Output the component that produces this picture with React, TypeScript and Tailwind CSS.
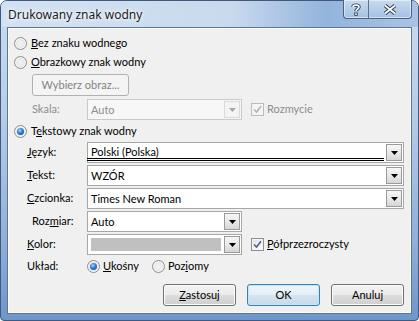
import React from "react";

function Radio({ checked }: { checked?: boolean }) {
  return (
    <div className="w-[13px] h-[13px] shrink-0 rounded-full border border-[#8e8f8f] bg-[radial-gradient(circle_at_50%_50%,#f4f4f4_0%,#e8e8e8_55%,#d3d3d3_100%)] shadow-[inset_0_0_0_1px_#f6f6f6] flex items-center justify-center">
      {checked && (
        <div className="w-[7px] h-[7px] rounded-full bg-[radial-gradient(circle_at_40%_35%,#9ad9ff_0%,#2f7fd6_45%,#123e8c_100%)]" />
      )}
    </div>
  );
}

function Check({ disabled }: { disabled?: boolean }) {
  return (
    <div
      className={`w-[13px] h-[13px] shrink-0 border flex items-center justify-center ${
        disabled
          ? "border-[#bcbcbc] bg-[#f4f4f4]"
          : "border-[#8e8f8f] bg-[linear-gradient(135deg,#dcdcdc_0%,#f0f0f0_50%,#ffffff_100%)] shadow-[inset_0_0_0_1px_#f4f4f4]"
      }`}
    >
      <svg width="9" height="9" viewBox="0 0 9 9">
        <path
          d="M1 4.5 L3.5 7 L8 1.2"
          fill="none"
          stroke={disabled ? "#b3b3b3" : "#4a5f97"}
          strokeWidth="1.6"
        />
      </svg>
    </div>
  );
}

function DropBtn({ disabled }: { disabled?: boolean }) {
  return (
    <div
      className={`w-[16px] h-[17px] mr-[1px] shrink-0 border flex items-center justify-center ${
        disabled
          ? "border-[#dadada] bg-[#f4f4f4]"
          : "border-[#9a9a9a] bg-[linear-gradient(to_bottom,#f6f6f6_0%,#e9e9e9_50%,#d6d6d6_100%)]"
      }`}
    >
      <svg width="7" height="4" viewBox="0 0 7 4">
        <path d="M0 0h7L3.5 4z" fill={disabled ? "#a6a6a6" : "#000"} />
      </svg>
    </div>
  );
}

function Combo({
  value,
  short,
  disabled,
  underlined,
  swatch,
}: {
  value?: string;
  short?: boolean;
  disabled?: boolean;
  underlined?: boolean;
  swatch?: boolean;
}) {
  return (
    <div
      className={`h-[21px] flex items-center border ${short ? "w-[155px]" : "flex-1"} ${
        disabled ? "border-[#c9c9c9] bg-[#f7f7f7] text-[#8d8d8d]" : "border-[#a7a7a7] bg-white"
      }`}
    >
      {swatch ? (
        <div className="flex-1 h-[13px] ml-[3px] mr-[3px] bg-[#c0c0c0]" />
      ) : (
        <div className="flex-1 self-stretch flex items-center pl-[3px] mr-[2px]">
          <div
            className={`flex-1 h-full flex items-center leading-none ${
              underlined ? "border-b-[3px] border-double border-black -ml-[4px] pl-[4px] mb-[2px] pt-[2px]" : ""
            }`}
          >
            {value}
          </div>
        </div>
      )}
      <DropBtn disabled={disabled} />
    </div>
  );
}

function Btn({ children, kind }: { children: React.ReactNode; kind?: "default" | "disabled" }) {
  const cls =
    kind === "default"
      ? "border-[#3c7fb1] bg-[linear-gradient(to_bottom,#eef5fa_0%,#e3eef6_50%,#d4e4f0_50%,#c7dbea_100%)] shadow-[inset_0_0_0_1px_#c4e5f7]"
      : kind === "disabled"
      ? "border-[#adb2b5] bg-[#f4f4f4] text-[#838383]"
      : "border-[#707070] bg-[linear-gradient(to_bottom,#f2f2f2_0%,#ebebeb_50%,#dddddd_50%,#cfcfcf_100%)] shadow-[inset_0_0_0_1px_#fcfcfc]";
  return (
    <div className={`w-[73px] h-[22px] rounded-[3px] border flex items-center justify-center ${cls}`}>
      {children}
    </div>
  );
}

export default function App() {
  return (
    <div className="w-[419px] h-[321px] bg-white font-['Lato',sans-serif] text-[11px] text-black overflow-hidden">
      <div className="w-full h-full rounded-t-[7px] rounded-b-[4px] border border-[#43587a] bg-[linear-gradient(to_bottom,#cbdcef_0%,#b7cde8_35%,#8fb0da_75%,#6d96cb_100%)] flex flex-col">
        {/* Title bar */}
        <div className="h-[26px] flex items-start bg-[linear-gradient(to_right,#d3e2f2_0%,#c9daee_55%,#93b4dc_78%,#a9c3e4_100%)] rounded-t-[6px]">
          <div className="pl-[7px] pt-[5px] font-['Noto_Sans',sans-serif] text-[12px] text-[#1b1b1b] [text-shadow:0_0_6px_#ffffff,0_0_3px_#ffffff]">
            Drukowany znak wodny
          </div>
          <div className="ml-auto mr-[6px] -mt-[1px] flex h-[19px] rounded-b-[4px] border border-t-0 border-[#4b6382] overflow-hidden shadow-[inset_0_0_0_1px_rgba(255,255,255,0.5)] bg-[linear-gradient(to_bottom,#c8daef_0%,#b3cbe8_60%,#a4c0e3_100%)]">
            <div className="w-[25px] h-full flex items-center justify-center border-r border-[#5b7393]">
              <svg width="10" height="13" viewBox="0 0 10 13">
                <path d="M2 4 C2 1.5 8 1.5 8 4 C8 6 5 6 5 8.2" fill="none" stroke="#2c3e57" strokeWidth="3.4" />
                <path d="M2 4 C2 1.5 8 1.5 8 4 C8 6 5 6 5 8.2" fill="none" stroke="#ffffff" strokeWidth="1.6" />
                <rect x="3.3" y="9.6" width="3.4" height="3.2" fill="#2c3e57" />
                <rect x="4.2" y="10.4" width="1.6" height="1.6" fill="#ffffff" />
              </svg>
            </div>
            <div className="w-[42px] h-full flex items-center justify-center">
              <svg width="14" height="11" viewBox="0 0 14 11">
                <path d="M2 1.5 L12 9.5 M12 1.5 L2 9.5" stroke="#2c3e57" strokeWidth="3.8" />
                <path d="M2 1.5 L12 9.5 M12 1.5 L2 9.5" stroke="#ffffff" strokeWidth="1.8" />
              </svg>
            </div>
          </div>
        </div>

        {/* Client area */}
        <div className="mx-[6px] h-[287px] border border-[#5d7697] bg-[#f0f0f0] shadow-[inset_0_0_0_1px_#fbfcfd] flex flex-col">
          <div className="h-[19px] mt-[6px] flex items-center pl-[6px] gap-[4px]">
            <Radio />
            <span>
              <span className="underline">B</span>ez znaku wodnego
            </span>
          </div>
          <div className="h-[19px] flex items-center pl-[6px] gap-[4px]">
            <Radio />
            <span>
              <span className="underline">O</span>brazkowy znak wodny
            </span>
          </div>
          <div className="mt-[2px] pl-[24px] flex">
            <div className="w-[97px] h-[22px] rounded-[3px] border border-[#adb2b5] bg-[#f4f4f4] text-[#838383] flex items-center justify-center">
              Wybierz obraz...
            </div>
          </div>
          <div className="mt-[3px] flex items-center pl-[19px] pr-[7px]">
            <div className="w-[60px] pl-[5px] text-[#8d8d8d]">Skala:</div>
            <Combo value="Auto" short disabled />
            <div className="ml-[9px] flex items-center gap-[3px] text-[#8d8d8d]">
              <Check disabled />
              <span>Rozmycie</span>
            </div>
          </div>
          <div className="h-[19px] mt-[2px] flex items-center pl-[6px] gap-[4px]">
            <Radio checked />
            <span>
              T<span className="underline">e</span>kstowy znak wodny
            </span>
          </div>
          <div className="mt-[1px] flex items-center pl-[19px] pr-[7px]">
            <div className="w-[60px]">
              <span className="underline">J</span>ęzyk:
            </div>
            <Combo value="Polski (Polska)" underlined />
          </div>
          <div className="mt-[2px] flex items-center pl-[19px] pr-[7px]">
            <div className="w-[60px]">
              <span className="underline">T</span>ekst:
            </div>
            <Combo value="WZÓR" />
          </div>
          <div className="mt-[2px] flex items-center pl-[19px] pr-[7px]">
            <div className="w-[60px]">
              <span className="underline">C</span>zcionka:
            </div>
            <Combo value="Times New Roman" />
          </div>
          <div className="mt-[2px] flex items-center pl-[19px] pr-[7px]">
            <div className="w-[60px] pl-[5px]">
              Roz<span className="underline">m</span>iar:
            </div>
            <Combo value="Auto" short />
          </div>
          <div className="mt-[2px] flex items-center pl-[19px] pr-[7px]">
            <div className="w-[60px]">
              <span className="underline">K</span>olor:
            </div>
            <Combo short swatch />
            <div className="ml-[9px] flex items-center gap-[3px]">
              <Check />
              <span>
                <span className="underline">P</span>ółprzezroczysty
              </span>
            </div>
          </div>
          <div className="h-[19px] mt-[2px] flex items-center pl-[19px]">
            <div className="w-[60px]">Układ:</div>
            <div className="flex items-center gap-[3px]">
              <Radio checked />
              <span>
                <span className="underline">U</span>kośny
              </span>
            </div>
            <div className="ml-[13px] flex items-center gap-[3px]">
              <Radio />
              <span>
                Poz<span className="underline">i</span>omy
              </span>
            </div>
          </div>
          <div className="mt-[8px] flex justify-end gap-[11px] pr-[7px]">
            <Btn>
              <span>
                <span className="underline">Z</span>astosuj
              </span>
            </Btn>
            <Btn kind="default">OK</Btn>
            <Btn>Anuluj</Btn>
          </div>
        </div>
      </div>
    </div>
  );
}
